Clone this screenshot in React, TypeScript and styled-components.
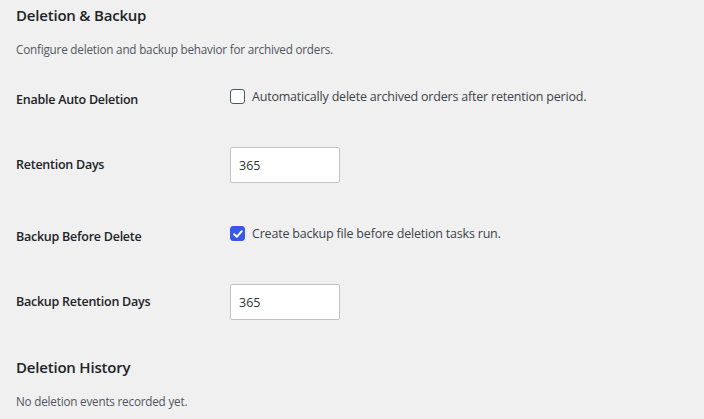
import React from "react";
import styled, { createGlobalStyle } from "styled-components";

const GlobalStyle = createGlobalStyle`
  html, body {
    margin: 0;
    padding: 0;
    background: #f0f0f1;
  }
  body {
    font-family: "Open Sans", "Noto Sans", "Liberation Sans", sans-serif;
    color: #1d2327;
  }
`;

interface SettingRow {
  label: string;
  kind: "checkbox" | "number";
  checked?: boolean;
  text?: string;
  value?: string;
}

const rows: SettingRow[] = [
  {
    label: "Enable Auto Deletion",
    kind: "checkbox",
    checked: false,
    text: "Automatically delete archived orders after retention period.",
  },
  { label: "Retention Days", kind: "number", value: "365" },
  {
    label: "Backup Before Delete",
    kind: "checkbox",
    checked: true,
    text: "Create backup file before deletion tasks run.",
  },
  { label: "Backup Retention Days", kind: "number", value: "365" },
];

export default function App() {
  return (
    <>
      <GlobalStyle />
      <Wrap>
        <Title>Deletion &amp; Backup</Title>
        <Description>Configure deletion and backup behavior for archived orders.</Description>
        <Table>
          {rows.map((row) => (
            <Row key={row.label} $tall={row.kind === "checkbox"}>
              <Label $shift={row.kind === "checkbox"}>{row.label}</Label>
              {row.kind === "checkbox" ? (
                <CheckLabel>
                  <Box $checked={!!row.checked}>
                    {row.checked && (
                      <svg width="12" height="12" viewBox="0 0 12 12">
                        <path
                          d="M2.2 6.2 L4.8 8.8 L9.8 3.2"
                          fill="none"
                          stroke="#fff"
                          strokeWidth="2"
                          strokeLinecap="round"
                          strokeLinejoin="round"
                        />
                      </svg>
                    )}
                  </Box>
                  {row.text}
                </CheckLabel>
              ) : (
                <NumberInput>{row.value}</NumberInput>
              )}
            </Row>
          ))}
        </Table>
        <Title $spaced>Deletion History</Title>
        <Description $gap={12}>No deletion events recorded yet.</Description>
      </Wrap>
    </>
  );
}

const Wrap = styled.div`
  padding: 4px 16px 0 16px;
`;

const Title = styled.h2<{ $spaced?: boolean }>`
  margin: ${(p) => (p.$spaced ? "21px" : "0")} 0 0 0;
  font-size: 15px;
  font-weight: 600;
  line-height: 22px;
  letter-spacing: -0.2px;
`;

const Description = styled.p<{ $gap?: number }>`
  margin: ${(p) => p.$gap ?? 12}px 0 0 0;
  font-size: 11.7px;
  line-height: 22px;
  letter-spacing: -0.2px;
  color: #50575e;
`;

const Table = styled.div`
  margin-top: 1px;
  display: flex;
  flex-direction: column;
`;

const Row = styled.div<{ $tall: boolean }>`
  display: grid;
  grid-template-columns: 214px 1fr;
  align-items: center;
  height: ${(p) => (p.$tall ? 71 : 66)}px;
`;

const Label = styled.div<{ $shift: boolean }>`
  font-size: 12.5px;
  font-weight: 600;
  line-height: 18px;
  letter-spacing: -0.25px;
  margin-top: ${(p) => (p.$shift ? 7 : 0)}px;
`;

const CheckLabel = styled.label`
  display: flex;
  align-items: center;
  gap: 7px;
  font-size: 12.5px;
  letter-spacing: -0.2px;
  color: #3c434a;
  line-height: 18px;
`;

const Box = styled.span<{ $checked: boolean }>`
  box-sizing: border-box;
  width: 15px;
  height: 15px;
  border-radius: 3px;
  border: 1px solid ${(p) => (p.$checked ? "#3858e9" : "#50575e")};
  background: ${(p) => (p.$checked ? "#3858e9" : "#fff")};
  display: flex;
  align-items: center;
  justify-content: center;
`;

const NumberInput = styled.div`
  box-sizing: border-box;
  width: 110px;
  height: 36px;
  background: #fff;
  border: 1px solid #c3c4c7;
  border-radius: 2px;
  padding: 0 8px;
  display: flex;
  align-items: center;
  font-size: 12.5px;
  color: #2c3338;
`;
